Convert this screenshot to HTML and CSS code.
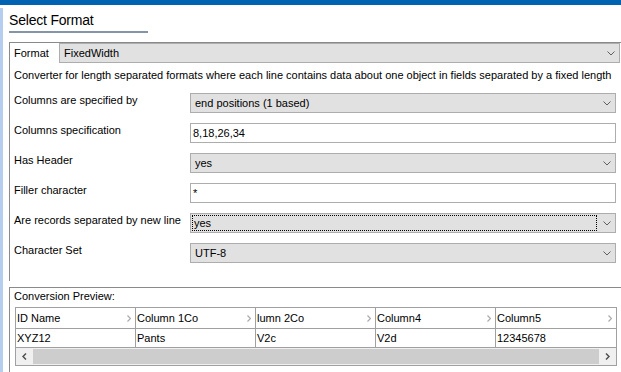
FILE: index.html
```html
<!DOCTYPE html>
<html lang="en">
<head>
  <meta charset="UTF-8">
  <meta name="viewport" content="width=device-width, initial-scale=1.0">
  <title>Select Format</title>
  <link rel="stylesheet" href="styles.css">
</head>
<body>
  <div class="top-bar"></div>

  <div class="window">
    <div class="side-strip"></div>

    <div class="content">
      <h1 class="title">Select Format</h1>

      <div class="format-panel">
        <div class="format-row">
          <span class="format-label">Format</span>
          <div class="select format-select">
            <span class="select-value">FixedWidth</span>
            <svg class="chevron" width="8" height="5" viewBox="0 0 8 5"><path d="M0.5 0.5 L4 4 L7.5 0.5" fill="none" stroke="#606060" stroke-width="1"/></svg>
          </div>
        </div>

        <p class="desc">Converter for length separated formats where each line contains data about one object in fields separated by a fixed length</p>

        <div class="fields">
          <span class="field-label">Columns are specified by</span>
          <div class="select">
            <span class="select-value">end positions (1 based)</span>
            <svg class="chevron" width="8" height="5" viewBox="0 0 8 5"><path d="M0.5 0.5 L4 4 L7.5 0.5" fill="none" stroke="#606060" stroke-width="1"/></svg>
          </div>

          <span class="field-label">Columns specification</span>
          <div class="text-input">8,18,26,34</div>

          <span class="field-label">Has Header</span>
          <div class="select">
            <span class="select-value">yes</span>
            <svg class="chevron" width="8" height="5" viewBox="0 0 8 5"><path d="M0.5 0.5 L4 4 L7.5 0.5" fill="none" stroke="#606060" stroke-width="1"/></svg>
          </div>

          <span class="field-label">Filler character</span>
          <div class="text-input">*</div>

          <span class="field-label">Are records separated by new line</span>
          <div class="select">
            <span class="select-value focused">yes</span>
            <svg class="chevron" width="8" height="5" viewBox="0 0 8 5"><path d="M0.5 0.5 L4 4 L7.5 0.5" fill="none" stroke="#606060" stroke-width="1"/></svg>
          </div>

          <span class="field-label">Character Set</span>
          <div class="select">
            <span class="select-value">UTF-8</span>
            <svg class="chevron" width="8" height="5" viewBox="0 0 8 5"><path d="M0.5 0.5 L4 4 L7.5 0.5" fill="none" stroke="#606060" stroke-width="1"/></svg>
          </div>
        </div>
      </div>

      <div class="preview-panel">
        <div class="preview-title">Conversion Preview:</div>

        <div class="preview-table">
          <div class="head-row">
            <div class="head-cell"><span>ID Name</span><svg width="4" height="7" viewBox="0 0 4 7"><path d="M0.5 0.5 L3.5 3.5 L0.5 6.5" fill="none" stroke="#a8a8a8" stroke-width="1.2"/></svg></div>
            <div class="head-cell"><span>Column 1Co</span><svg width="4" height="7" viewBox="0 0 4 7"><path d="M0.5 0.5 L3.5 3.5 L0.5 6.5" fill="none" stroke="#a8a8a8" stroke-width="1.2"/></svg></div>
            <div class="head-cell"><span>lumn 2Co</span><svg width="4" height="7" viewBox="0 0 4 7"><path d="M0.5 0.5 L3.5 3.5 L0.5 6.5" fill="none" stroke="#a8a8a8" stroke-width="1.2"/></svg></div>
            <div class="head-cell"><span>Column4</span><svg width="4" height="7" viewBox="0 0 4 7"><path d="M0.5 0.5 L3.5 3.5 L0.5 6.5" fill="none" stroke="#a8a8a8" stroke-width="1.2"/></svg></div>
            <div class="head-cell"><span>Column5</span><svg width="4" height="7" viewBox="0 0 4 7"><path d="M0.5 0.5 L3.5 3.5 L0.5 6.5" fill="none" stroke="#a8a8a8" stroke-width="1.2"/></svg></div>
          </div>

          <div class="data-row">
            <div class="data-cell">XYZ12</div>
            <div class="data-cell">Pants</div>
            <div class="data-cell">V2c</div>
            <div class="data-cell">V2d</div>
            <div class="data-cell">12345678</div>
          </div>

          <div class="h-scroll">
            <div class="scroll-btn">
              <svg width="5" height="7" viewBox="0 0 5 7"><path d="M4 0.5 L1 3.5 L4 6.5" fill="none" stroke="#505050" stroke-width="1.5"/></svg>
            </div>
            <div class="scroll-thumb"></div>
            <div class="scroll-btn">
              <svg width="5" height="7" viewBox="0 0 5 7"><path d="M1 0.5 L4 3.5 L1 6.5" fill="none" stroke="#505050" stroke-width="1.5"/></svg>
            </div>
          </div>
        </div>
      </div>
    </div>
  </div>
</body>
</html>
```

FILE: styles.css
```css
body{
  margin: 0;
  width: 621px;
  height: 372px;
  overflow: hidden;
  background-color: #fff;
  font-family: "Liberation Sans", Arial, sans-serif;
  font-size: 11px;
  color: #000;
}

.top-bar{
  height: 5px;
  background-color: #0063b1;
}

.window{
  display: flex;
  height: 367px;
}

.side-strip{
  width: 3px;
  margin-top: 3px;
  background-color: #b5cdee;
}

.content{
  flex: 1;
  margin-left: 6px;
  min-width: 0;
}


/* title */

.title{
  width: 139px;
  margin: 5px 0 0 0;
  padding-bottom: 1px;
  font-size: 14px;
  font-weight: normal;
  letter-spacing: -0.2px;
  line-height: 20px;
  border-bottom: 2px solid #8495a6;
}


/* first panel */

.format-panel{
  margin-top: 9px;
  padding: 0 1px 18px 4px;
  border-top: 1px solid #8a8a8a;
  border-left: 1px solid #8a8a8a;
}

.format-row{
  display: flex;
  align-items: center;
}

.format-label{
  width: 45px;
}

.select{
  display: flex;
  align-items: center;
  box-sizing: border-box;
  height: 20px;
  background-color: #e1e1e1;
  border: 1px solid #adadad;
}

.format-select{
  flex: 1;
}

.format-select .select-value{
  padding-left: 2px;
}

.select-value{
  flex: 1;
  box-sizing: border-box;
  height: 16px;
  line-height: 14px;
  margin: 0 6px 0 1px;
  padding-left: 2px;
  border: 1px solid transparent;
}

.select-value.focused{
  padding-left: 1px;
  border: 1px dotted #000;
}

.chevron{
  margin-right: 4px;
}

.desc{
  margin: 5px 0 0 0;
  line-height: 14px;
}

.fields{
  display: grid;
  grid-template-columns: 176px 1fr;
  row-gap: 10px;
  margin: 11px 4px 0 0;
}

.field-label{
  line-height: 14px;
}

.text-input{
  box-sizing: border-box;
  height: 20px;
  padding-left: 2px;
  line-height: 18px;
  background-color: #fff;
  border: 1px solid #adadad;
}


/* preview panel */

.preview-panel{
  height: 100px;
  margin-top: 6px;
  padding-left: 4px;
  border-top: 1px solid #8a8a8a;
  border-left: 1px solid #8a8a8a;
}

.preview-title{
  margin-top: 1px;
  line-height: 14px;
}

.preview-table{
  width: 602px;
  box-sizing: border-box;
  margin: 4px 0 0 1px;
  border: 1px solid #a0a0a0;
}

.head-row,
.data-row{
  display: grid;
  grid-template-columns: 120px 120px 120px 120px 1fr;
  border-bottom: 1px solid #a0a0a0;
}

.head-row{
  height: 20px;
}

.data-row{
  height: 18px;
}

.head-cell,
.data-cell{
  display: flex;
  align-items: center;
  box-sizing: border-box;
  padding-left: 1px;
  border-right: 1px solid #a0a0a0;
  white-space: nowrap;
  overflow: hidden;
}

.head-cell:last-child,
.data-cell:last-child{
  border-right: none;
}

.head-cell{
  justify-content: space-between;
  padding-right: 4px;
}

.h-scroll{
  display: flex;
  height: 17px;
  background-color: #f0f0f0;
}

.scroll-btn{
  display: flex;
  align-items: center;
  justify-content: center;
  width: 17px;
}

.scroll-thumb{
  flex: 1;
  margin: 1px 0;
  background-color: #cdcdcd;
}
```
